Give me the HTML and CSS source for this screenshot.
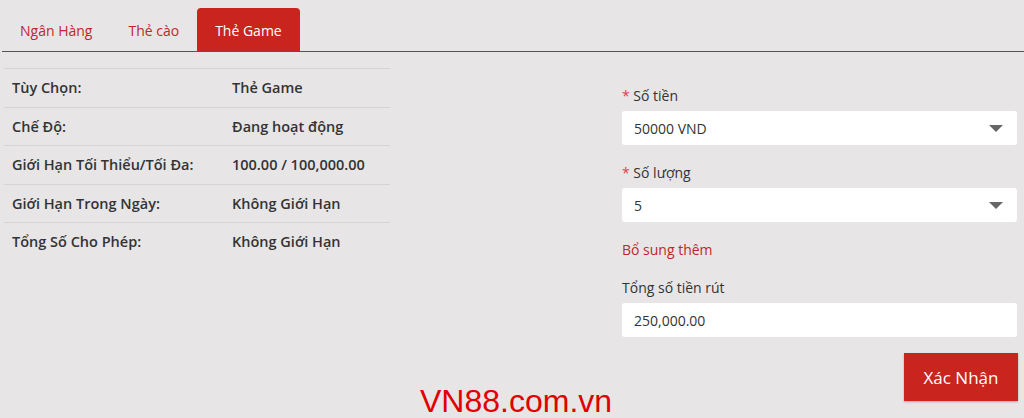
FILE: index.html
```html
<!DOCTYPE html>
<html lang="vi">
<head>
<meta charset="utf-8">
<title>Thẻ Game</title>
<link rel="stylesheet" href="styles.css">
</head>
<body>
<div class="page">
  <nav class="tabs">
    <a class="tab">Ngân Hàng</a>
    <a class="tab">Thẻ cào</a>
    <a class="tab active">Thẻ Game</a>
  </nav>
  <div class="content">
    <div class="info">
      <div class="row"><span class="key">Tùy Chọn:</span><span class="val">Thẻ Game</span></div>
      <div class="row"><span class="key">Chế Độ:</span><span class="val">Đang hoạt động</span></div>
      <div class="row"><span class="key">Giới Hạn Tối Thiểu/Tối Đa:</span><span class="val">100.00 / 100,000.00</span></div>
      <div class="row"><span class="key">Giới Hạn Trong Ngày:</span><span class="val">Không Giới Hạn</span></div>
      <div class="row"><span class="key">Tổng Số Cho Phép:</span><span class="val">Không Giới Hạn</span></div>
    </div>
    <form class="form">
      <label class="label"><span class="req">*</span> Số tiền</label>
      <div class="field select"><span>50000 VND</span><span class="caret"></span></div>
      <label class="label"><span class="req">*</span> Số lượng</label>
      <div class="field select"><span>5</span><span class="caret"></span></div>
      <div class="extra">Bổ sung thêm</div>
      <label class="label">Tổng số tiền rút</label>
      <div class="field"><span>250,000.00</span></div>
      <div class="actions"><button type="button" class="btn">Xác Nhận</button></div>
    </form>
  </div>
  <div class="watermark">VN88.com.vn</div>
</div>
</body>
</html>
```
FILE: styles.css
```css
html, body {
  margin: 0;
  padding: 0;
}
body {
  background: #e7e5e6;
  font-family: "Open Sans", "Noto Sans", sans-serif;
  color: #333;
  width: 1024px;
  height: 418px;
  overflow: hidden;
}
.page {
  position: relative;
  height: 418px;
  padding-top: 8px;
  box-sizing: border-box;
}
.tabs {
  display: flex;
  margin-left: 2px;
  border-bottom: 1px solid #555;
  height: 43px;
}
.tab {
  display: flex;
  align-items: center;
  padding: 2px 18px 0;
  height: 43px;
  box-sizing: border-box;
  color: #c0272d;
  font-size: 14px;
  border-radius: 4px 4px 0 0;
}
.tab.active {
  background: #c9241e;
  color: #fff;
}
.content {
  display: flex;
  justify-content: space-between;
  padding: 0 7px 0 4px;
}
.info {
  width: 386px;
  margin-top: 16px;
  border-top: 1px solid #d6d4d5;
}
.row {
  display: flex;
  align-items: center;
  height: 37.5px;
  border-bottom: 1px solid #d6d4d5;
  font-size: 14.5px;
  font-weight: 600;
  color: #333;
}
.row:last-child {
  border-bottom: none;
}
.key {
  width: 228px;
  padding-left: 8px;
  box-sizing: border-box;
}
.form {
  width: 395px;
  margin-top: 34px;
  display: flex;
  flex-direction: column;
}
.label {
  font-size: 14px;
  line-height: 20px;
  color: #333;
  margin-bottom: 5px;
}
.req {
  color: #d9434a;
}
.field {
  height: 34px;
  background: #fff;
  border-radius: 3px;
  display: flex;
  align-items: center;
  justify-content: space-between;
  padding: 0 14px 0 12px;
  font-size: 14px;
  color: #333;
  margin-bottom: 18px;
}
.caret {
  width: 0;
  height: 0;
  border-left: 7.5px solid transparent;
  border-right: 7.5px solid transparent;
  border-top: 7px solid #666;
}
.extra {
  font-size: 14px;
  line-height: 20px;
  color: #c0272d;
  margin-bottom: 18px;
}
.actions {
  display: flex;
  justify-content: flex-end;
  margin-top: -2px;
  margin-right: -1px;
}
.btn {
  width: 114px;
  height: 48px;
  background: #c9241e;
  color: #fff;
  border: none;
  border-radius: 0;
  font-family: "Open Sans", "Noto Sans", sans-serif;
  font-size: 17px;
  box-shadow: 0 1px 2px rgba(0,0,0,0.25);
}
.watermark {
  position: absolute;
  left: 420px;
  top: 382px;
  font-family: "Liberation Sans", Arial, sans-serif;
  font-size: 32px;
  line-height: 38px;
  color: #e00000;
}
```
